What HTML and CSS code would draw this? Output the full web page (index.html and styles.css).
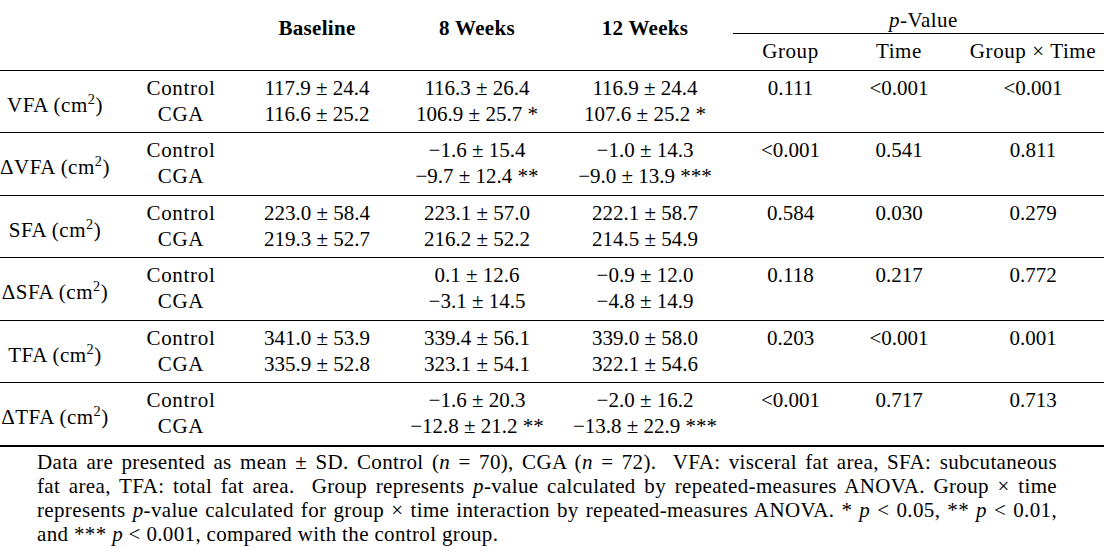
FILE: index.html
```html
<!DOCTYPE html>
<html lang="en">
<head>
<meta charset="utf-8">
<title>Table</title>
<link rel="stylesheet" href="styles.css">
</head>
<body>
<div class="tbl">
  <div class="head">
    <div class="hblank c1"></div>
    <div class="hblank c2"></div>
    <div class="hmain c3">Baseline</div>
    <div class="hmain c4">8 Weeks</div>
    <div class="hmain c5">12 Weeks</div>
    <div class="pv"><i>p</i>-Value</div>
    <div class="hsub c6">Group</div>
    <div class="hsub c7">Time</div>
    <div class="hsub c8">Group × Time</div>
  </div>

  <div class="row">
    <div class="lbl c1">VFA (cm<sup>2</sup>)</div>
    <div class="cell grp c2"><div>Control</div><div>CGA</div></div>
    <div class="cell c3"><div>117.9 ± 24.4</div><div>116.6 ± 25.2</div></div>
    <div class="cell c4"><div>116.3 ± 26.4</div><div>106.9 ± 25.7 *</div></div>
    <div class="cell c5"><div>116.9 ± 24.4</div><div>107.6 ± 25.2 *</div></div>
    <div class="cell c6">0.111</div>
    <div class="cell c7">&lt;0.001</div>
    <div class="cell c8">&lt;0.001</div>
  </div>

  <div class="row">
    <div class="lbl c1">ΔVFA (cm<sup>2</sup>)</div>
    <div class="cell grp c2"><div>Control</div><div>CGA</div></div>
    <div class="cell c3"></div>
    <div class="cell c4"><div>−1.6 ± 15.4</div><div>−9.7 ± 12.4 **</div></div>
    <div class="cell c5"><div>−1.0 ± 14.3</div><div>−9.0 ± 13.9 ***</div></div>
    <div class="cell c6">&lt;0.001</div>
    <div class="cell c7">0.541</div>
    <div class="cell c8">0.811</div>
  </div>

  <div class="row">
    <div class="lbl c1">SFA (cm<sup>2</sup>)</div>
    <div class="cell grp c2"><div>Control</div><div>CGA</div></div>
    <div class="cell c3"><div>223.0 ± 58.4</div><div>219.3 ± 52.7</div></div>
    <div class="cell c4"><div>223.1 ± 57.0</div><div>216.2 ± 52.2</div></div>
    <div class="cell c5"><div>222.1 ± 58.7</div><div>214.5 ± 54.9</div></div>
    <div class="cell c6">0.584</div>
    <div class="cell c7">0.030</div>
    <div class="cell c8">0.279</div>
  </div>

  <div class="row">
    <div class="lbl c1">ΔSFA (cm<sup>2</sup>)</div>
    <div class="cell grp c2"><div>Control</div><div>CGA</div></div>
    <div class="cell c3"></div>
    <div class="cell c4"><div>0.1 ± 12.6</div><div>−3.1 ± 14.5</div></div>
    <div class="cell c5"><div>−0.9 ± 12.0</div><div>−4.8 ± 14.9</div></div>
    <div class="cell c6">0.118</div>
    <div class="cell c7">0.217</div>
    <div class="cell c8">0.772</div>
  </div>

  <div class="row">
    <div class="lbl c1">TFA (cm<sup>2</sup>)</div>
    <div class="cell grp c2"><div>Control</div><div>CGA</div></div>
    <div class="cell c3"><div>341.0 ± 53.9</div><div>335.9 ± 52.8</div></div>
    <div class="cell c4"><div>339.4 ± 56.1</div><div>323.1 ± 54.1</div></div>
    <div class="cell c5"><div>339.0 ± 58.0</div><div>322.1 ± 54.6</div></div>
    <div class="cell c6">0.203</div>
    <div class="cell c7">&lt;0.001</div>
    <div class="cell c8">0.001</div>
  </div>

  <div class="row">
    <div class="lbl c1">ΔTFA (cm<sup>2</sup>)</div>
    <div class="cell grp c2"><div>Control</div><div>CGA</div></div>
    <div class="cell c3"></div>
    <div class="cell c4"><div>−1.6 ± 20.3</div><div>−12.8 ± 21.2 **</div></div>
    <div class="cell c5"><div>−2.0 ± 16.2</div><div>−13.8 ± 22.9 ***</div></div>
    <div class="cell c6">&lt;0.001</div>
    <div class="cell c7">0.717</div>
    <div class="cell c8">0.713</div>
  </div>
</div>

<div class="note">
  <div class="nl">Data are presented as mean ± SD. Control (<i>n</i> = 70), CGA (<i>n</i> = 72).&nbsp; VFA: visceral fat area, SFA: subcutaneous</div>
  <div class="nl">fat area, TFA: total fat area.&nbsp; Group represents <i>p</i>-value calculated by repeated-measures ANOVA. Group × time</div>
  <div class="nl">represents <i>p</i>-value calculated for group × time interaction by repeated-measures ANOVA. * <i>p</i> &lt; 0.05, ** <i>p</i> &lt; 0.01,</div>
  <div class="nl last">and *** <i>p</i> &lt; 0.001, compared with the control group.</div>
</div>
</body>
</html>
```

FILE: styles.css
```css
html, body {
  margin: 0;
  padding: 0;
  background: #ffffff;
}

body {
  width: 1104px;
  height: 552px;
  overflow: hidden;
  font-family: "Liberation Serif", "Times New Roman", serif;
  font-size: 21px;
  line-height: 26px;
  color: #000000;
}

.tbl {
  display: flex;
  flex-direction: column;
}

.head,
.row {
  display: grid;
  grid-template-columns: 110px 142px 130px 190px 161px 115px 102px 154px;
}

.head {
  grid-template-rows: 34px 36px;
  height: 70px;
}

.hblank { grid-row: 1 / 3; }

.hmain {
  grid-row: 1 / 3;
  padding-top: 15px;
  font-weight: bold;
  text-align: center;
  letter-spacing: 0.3px;
}

.pv {
  grid-column: 6 / 9;
  grid-row: 1;
  padding-top: 7px;
  padding-left: 10px;
  box-sizing: border-box;
  height: 34px;
  border-bottom: 1px solid #000000;
  text-align: center;
  letter-spacing: 0.5px;
}

.hsub {
  grid-row: 2;
  padding-top: 4px;
  text-align: center;
  letter-spacing: 0.6px;
}

.row {
  box-sizing: border-box;
  height: 62px;
  border-top: 1px solid #000000;
  padding-top: 4px;
}

.row:nth-child(odd) { height: 63px; }

.row:last-child {
  height: 65px;
  border-bottom: 2px solid #000000;
}

.cell,
.lbl {
  text-align: center;
  white-space: nowrap;
}

.lbl {
  padding-top: 17px;
  letter-spacing: 0.5px;
}

.grp { letter-spacing: 0.7px; }

.c5 { padding-right: 15px; }
.c8 { padding-left: 12px; }

sup {
  font-size: 0.68em;
  line-height: 0;
  vertical-align: baseline;
  position: relative;
  top: -0.55em;
}

.note {
  padding: 3px 0 0 37px;
  width: 1020px;
  line-height: 24px;
  letter-spacing: 0.35px;
}

.nl {
  white-space: nowrap;
  text-align: justify;
  text-align-last: justify;
}

.nl.last {
  text-align: left;
  text-align-last: left;
}
```
